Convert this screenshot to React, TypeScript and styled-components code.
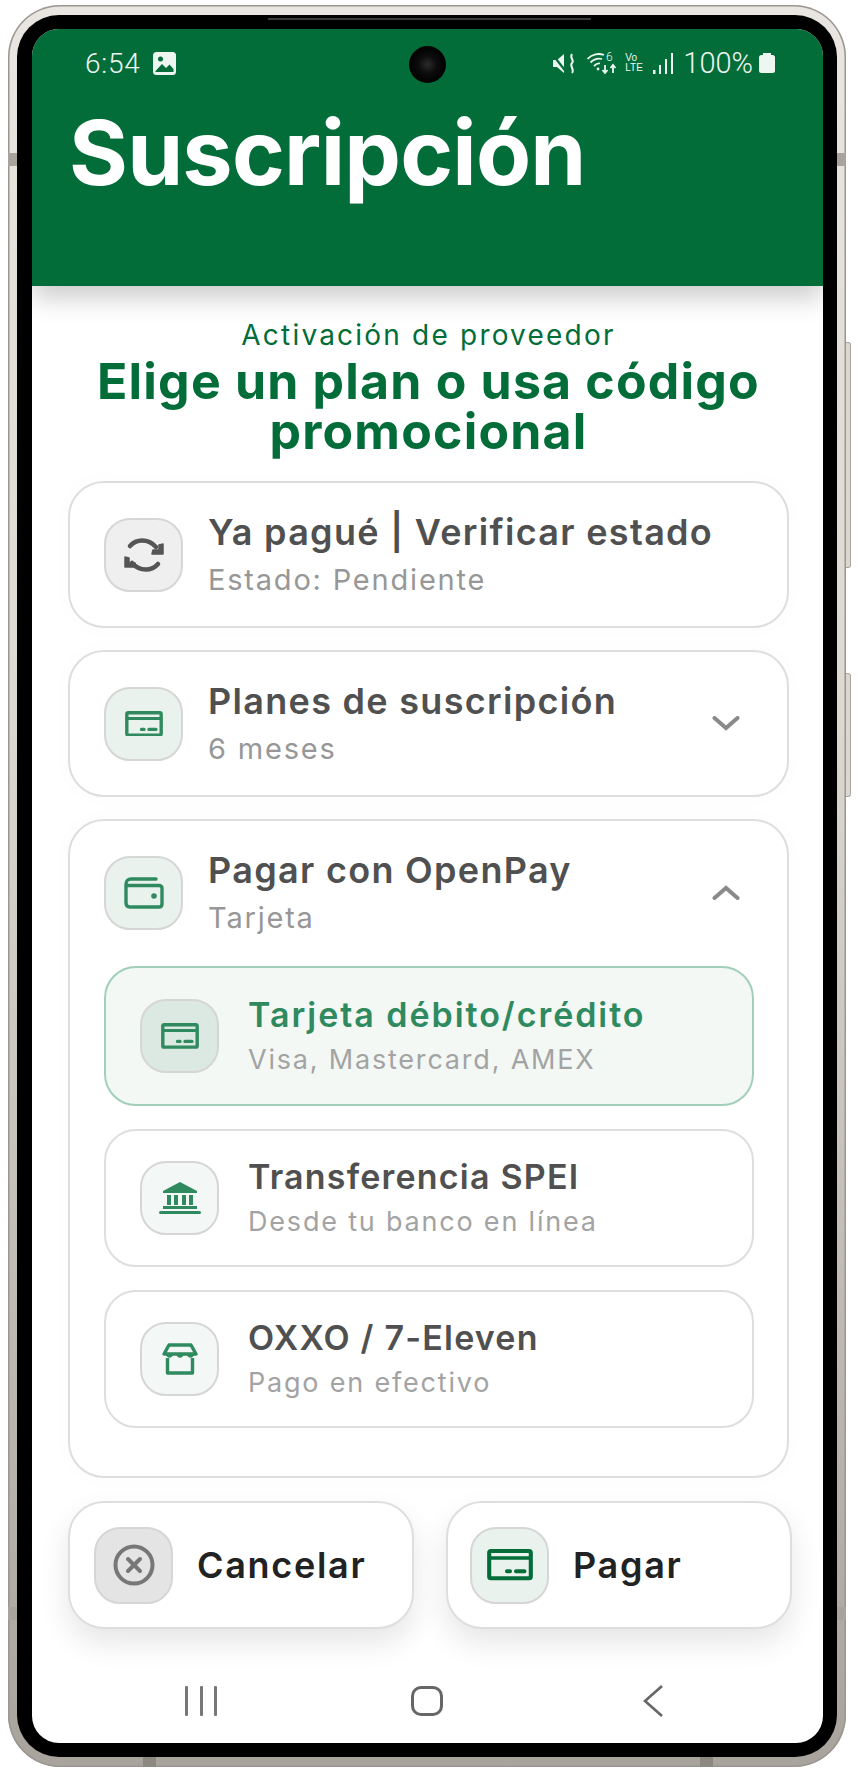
import React from "react";
import styled, { createGlobalStyle } from "styled-components";

const GlobalStyle = createGlobalStyle`
  html, body {
    margin: 0;
    padding: 0;
    background: #fff;
  }
  * {
    box-sizing: border-box;
  }
`;

const GREEN = "#026d39";
const SOFT_GREEN = "#2f8a5f";
const STATUS = "#eef6f1";

const SyncIcon = () => (
  <svg width="40" height="36" viewBox="0 0 40 36" fill="none">
    <path d="M6 9C12 2 24 1 32 10" stroke="#555" strokeWidth="4.500" strokeLinecap="round" />
    <path d="M39 7V17H28L29 13L35 13L35 8Z" fill="#555" stroke="#555" strokeWidth="1.500" strokeLinejoin="round" />
    <path d="M34 27C28 34 16 35 8 26" stroke="#555" strokeWidth="4.500" strokeLinecap="round" />
    <path d="M1 20V30H12L11 26L5 26L5 21Z" fill="#555" stroke="#555" strokeWidth="1.500" strokeLinejoin="round" />
  </svg>
);

const CardIcon = ({ size = 38, color = SOFT_GREEN }: { size?: number; color?: string }) => (
  <svg width={size} height={size * 0.68} viewBox="0 0 38 26" fill="none">
    <rect x="1.700" y="1.700" width="34.600" height="22.600" rx="1.500" stroke={color} strokeWidth="3.400" />
    <path d="M2 7.500H36" stroke={color} strokeWidth="3" />
    <path d="M16.500 18.500H19M24 18.500H31" stroke={color} strokeWidth="3.400" strokeLinecap="round" />
  </svg>
);

const WalletIcon = () => (
  <svg width="40" height="32" viewBox="0 0 40 32" fill="none" stroke={SOFT_GREEN} strokeWidth="3.400">
    <path d="M32 2H7C4 2 2 4 2 7V26C2 28.500 3.500 30 6 30H35C37 30 38 29 38 27V11C38 9.500 37 8.500 35 8.500H3" strokeLinecap="round" />
    <circle cx="30" cy="19" r="2.800" fill={SOFT_GREEN} stroke="none" />
  </svg>
);

const BankIcon = () => (
  <svg width="42" height="32" viewBox="0 0 42 32" fill={SOFT_GREEN}>
    <path d="M21 0L38 9V11H4V9Z" />
    <rect x="8" y="13" width="4" height="10" />
    <rect x="15" y="13" width="4" height="10" />
    <rect x="23" y="13" width="4" height="10" />
    <rect x="30" y="13" width="4" height="10" />
    <rect x="4" y="24" width="34" height="3" />
    <rect x="0" y="29" width="42" height="3" rx="1.500" />
  </svg>
);

const StoreIcon = () => (
  <svg width="36" height="32" viewBox="0 0 36 32" fill="none">
    <path d="M7 2H29L34 11H2Z" stroke={SOFT_GREEN} strokeWidth="3.400" strokeLinejoin="round" />
    <path d="M4 11H11C11 16 4 16 4 11ZM14.500 11H21.500C21.500 16 14.500 16 14.500 11ZM25 11H32C32 16 25 16 25 11Z" fill={SOFT_GREEN} />
    <path d="M5.500 15V30H30.500V15" stroke={SOFT_GREEN} strokeWidth="3.400" strokeLinejoin="round" />
  </svg>
);

const CancelIcon = () => (
  <svg width="42" height="42" viewBox="0 0 42 42" fill="none" stroke="#777" strokeWidth="4" strokeLinecap="round">
    <circle cx="21" cy="21" r="18.500" />
    <path d="M15 15L27 27M27 15L15 27" />
  </svg>
);

const Chevron = ({ up }: { up?: boolean }) => (
  <svg width="28" height="15" viewBox="0 0 28 15" fill="none" stroke="#8a8a8a" strokeWidth="4" strokeLinecap="round" strokeLinejoin="miter">
    <path d={up ? "M2.500 13L14 3L25.500 13" : "M2.500 2L14 12L25.500 2"} />
  </svg>
);

const GalleryIcon = () => (
  <svg width="23" height="23" viewBox="0 0 23 23">
    <rect width="23" height="23" rx="3.500" fill={STATUS} />
    <circle cx="7.500" cy="7" r="2.500" fill={GREEN} />
    <path d="M2.500 19L9 12L13 16L16.500 12.500L20.500 17V20H2.500Z" fill={GREEN} />
  </svg>
);

const MuteIcon = () => (
  <svg width="22" height="21" viewBox="0 0 22 21" fill="none">
    <path d="M0 7H4L11 1V20L4 14H0Z" fill={STATUS} />
    <path d="M0 2L14 20" stroke={GREEN} strokeWidth="2.200" />
    <path d="M19 1C16 5 22 7 19 10C16 13 22 16 19 20" stroke={STATUS} strokeWidth="2" />
  </svg>
);

const WifiIcon = () => (
  <svg width="32" height="22" viewBox="0 0 32 22" fill="none" stroke={STATUS} strokeWidth="1.800">
    <path d="M0.500 7C5 2 12 1 17 3" />
    <path d="M3.500 10.500C7 7 11 6 15 7" />
    <path d="M7 14C9 12 11 11 13 11.500" />
    <circle cx="11" cy="17" r="1.400" fill={STATUS} stroke="none" />
    <text x="19" y="9" fill={STATUS} stroke="none" fontSize="12" fontFamily="Roboto, sans-serif">6</text>
    <path d="M18 13V20M15.500 18L18 21L20.500 18" />
    <path d="M26 21V13M23.500 16L26 13L28.500 16" />
  </svg>
);

const SignalIcon = () => (
  <svg width="20" height="21" viewBox="0 0 20 21" fill={STATUS}>
    <rect x="0" y="17" width="2.500" height="4" />
    <rect x="6" y="12" width="2" height="9" />
    <rect x="12" y="6" width="2" height="15" />
    <rect x="18" y="0" width="2" height="21" />
  </svg>
);

const Page = styled.div`
  padding: 5px 16px 13px 8px;
  width: 862px;
  height: 1780px;
`;

const Device = styled.div`
  position: relative;
  height: 1762px;
  padding: 10px 9px;
  border-radius: 52px;
  background: linear-gradient(180deg, #e9e6e1 0%, #dcd8d2 40%, #a8a39d 100%);
  box-shadow: inset 0 0 0 1.5px #9b968f;
`;

const SideButton = styled.span<{ $top: number; $height: number }>`
  position: absolute;
  right: -5px;
  top: ${(p) => p.$top}px;
  height: ${(p) => p.$height}px;
  width: 5px;
  border-radius: 0 3px 3px 0;
  background: #dbd7d1;
  border: 1px solid #a9a49e;
  border-left: none;
`;

const AntennaBand = styled.span<{ $side: "left" | "right"; $top: number }>`
  position: absolute;
  ${(p) => p.$side}: 0;
  top: ${(p) => p.$top}px;
  width: 9px;
  height: 13px;
  background: #a8a39d;
`;

const BottomBand = styled.span<{ $left: number }>`
  position: absolute;
  bottom: 0;
  left: ${(p) => p.$left}px;
  width: 13px;
  height: 10px;
  background: #8d8882;
`;

const Bezel = styled.div`
  height: 100%;
  padding: 14px 14px 14px 15px;
  border-radius: 42px;
  background: #000;
`;

const Speaker = styled.span`
  position: absolute;
  top: 13px;
  left: 260px;
  width: 323px;
  height: 2px;
  background: #3a3a3a;
`;

const Screen = styled.div`
  display: flex;
  flex-direction: column;
  height: 100%;
  overflow: hidden;
  border-radius: 27px;
  background: #fff;
  font-family: Inter, "Liberation Sans", sans-serif;
`;

const Header = styled.header`
  position: relative;
  z-index: 1;
  flex: none;
  height: 257px;
  padding: 21px 36px 0 37px;
  background: ${GREEN};
  box-shadow: 0 12px 24px rgba(0, 0, 0, 0.2);
`;

const StatusBar = styled.div`
  display: flex;
  align-items: center;
  justify-content: space-between;
  height: 26px;
  padding: 0 12px 0 16px;
  color: ${STATUS};
  font-family: Roboto, sans-serif;
  font-weight: 300;
  font-size: 28px;
`;

const StatusGroup = styled.div`
  display: flex;
  align-items: center;
`;

const StatusSlot = styled.span<{ $gap: number }>`
  display: flex;
  margin-left: ${(p) => p.$gap}px;
`;

const Time = styled.span`
  letter-spacing: 0.8px;
`;

const Volte = styled.span`
  display: block;
  width: 18px;
  font-family: "Liberation Sans", sans-serif;
  font-weight: 400;
  font-size: 10px;
  line-height: 10px;
`;

const Percent = styled.span`
  font-size: 29px;
`;

const Battery = styled.span`
  position: relative;
  display: block;
  width: 16px;
  height: 18px;
  margin-top: 2px;
  border-radius: 2.5px;
  background: ${STATUS};

  &::before {
    content: "";
    position: absolute;
    top: -2px;
    left: 4px;
    width: 8px;
    height: 2px;
    background: ${STATUS};
  }
`;

const Camera = styled.span`
  position: absolute;
  top: 17px;
  left: 377px;
  width: 37px;
  height: 37px;
  border-radius: 50%;
  background: radial-gradient(circle, #2b2b2b 0, #0c0c0c 35%, #000 70%);
`;

const ScreenTitle = styled.h1`
  margin: 25px 0 0;
  color: #fff;
  font-weight: 700;
  font-size: 90px;
  line-height: 104px;
  letter-spacing: -0.8px;
`;

const Body = styled.main`
  flex: 1;
  display: flex;
  flex-direction: column;
  padding: 31px 34px 0 36px;
`;

const Overline = styled.div`
  color: ${GREEN};
  text-align: center;
  font-weight: 400;
  font-size: 28px;
  line-height: 36px;
  letter-spacing: 2.2px;
`;

const Heading = styled.h2`
  margin: 3px 0 25px;
  color: ${GREEN};
  text-align: center;
  font-weight: 700;
  font-size: 50px;
  line-height: 50px;
  letter-spacing: 1.2px;
`;

const Stack = styled.div`
  display: flex;
  flex-direction: column;
  gap: 22px;
`;

const Card = styled.section<{ $open?: boolean }>`
  padding: 0 33px ${(p) => (p.$open ? 48 : 0)}px 34px;
  border: 2px solid #dedede;
  border-radius: 36px;
  background: #fff;
  box-shadow: 0 0 24px rgba(0, 0, 0, 0.02);
`;

const CardHead = styled.div`
  display: flex;
  align-items: center;
  height: 143px;
  gap: 25px;
`;

const IconBox = styled.div<{ $tone: "gray" | "green" | "mint" | "strong" | "dark" }>`
  flex: none;
  display: flex;
  align-items: center;
  justify-content: center;
  width: 79px;
  height: 74px;
  border: 2px solid #d6d6d6;
  border-radius: 26px;
  background: ${(p) =>
    ({
      gray: "#efefef",
      dark: "#e4e4e4",
      green: "#e9f2ed",
      mint: "#f3f7f5",
      strong: "#dce9e2",
    })[p.$tone]};
`;

const CardText = styled.div`
  flex: 1;
  min-width: 0;
  padding-top: 2px;
`;

const CardTitle = styled.div`
  color: #505050;
  font-weight: 600;
  font-size: 36px;
  line-height: 46px;
  letter-spacing: 1.3px;
`;

const CardSub = styled.div`
  margin-top: 2px;
  color: #979797;
  font-size: 29px;
  line-height: 46px;
  letter-spacing: 1.8px;
`;

const CardAction = styled.div`
  flex: none;
  display: flex;
  margin-right: 14px;
`;

const Options = styled.div`
  display: flex;
  flex-direction: column;
  gap: 23px;
  margin-top: 2px;
`;

const Option = styled.div<{ $active?: boolean }>`
  display: flex;
  align-items: center;
  height: ${(p) => (p.$active ? 140 : 138)}px;
  gap: 29px;
  padding: 0 34px;
  border: 2px solid ${(p) => (p.$active ? "#a2cfb9" : "#dedede")};
  border-radius: 32px;
  background: ${(p) => (p.$active ? "#f3f8f5" : "#fff")};
`;

const OptionText = styled.div`
  padding-top: 3px;
`;

const OptionTitle = styled.div<{ $active?: boolean }>`
  color: ${(p) => (p.$active ? SOFT_GREEN : "#505050")};
  font-weight: 600;
  font-size: 34px;
  line-height: 42px;
  letter-spacing: ${(p) => (p.$active ? 1.95 : 1.2)}px;
`;

const OptionSub = styled.div`
  margin-top: 3px;
  color: #a3a3a3;
  font-size: 27px;
  line-height: 42px;
  letter-spacing: 1.8px;
`;

const Actions = styled.div`
  display: grid;
  grid-template-columns: 346px 346px;
  justify-content: space-between;
  margin: 23px -3px 0 0;
`;

const ActionButton = styled.button`
  display: flex;
  align-items: center;
  gap: 24px;
  height: 128px;
  padding: 0 24px;
  border: 2px solid #dedede;
  border-radius: 36px;
  background: #fff;
  box-shadow: 0 14px 30px rgba(0, 0, 0, 0.1);
  color: #222;
  font-family: inherit;
  font-weight: 600;
  font-size: 36px;
  letter-spacing: 1.7px;

  & + & {
    padding-left: 22px;
  }
`;

const ActionIconBox = styled(IconBox)`
  height: 77px;
`;

const NavBar = styled.nav`
  display: grid;
  grid-template-columns: repeat(3, 1fr);
  align-items: center;
  justify-items: center;
  height: 30px;
  margin: 56px 0 0;
  padding: 0 23px 0 20px;
`;

const Recents = styled.span`
  display: flex;
  gap: 11.5px;
  height: 30px;

  i {
    display: block;
    width: 3px;
    border-radius: 1px;
    background: #777;
  }
`;

const HomeKey = styled.span`
  width: 32px;
  height: 30px;
  border: 3px solid #666;
  border-radius: 10px;
`;

const BackKey = () => (
  <svg width="20" height="32" viewBox="0 0 20 32" fill="none" stroke="#666" strokeWidth="2.600">
    <path d="M19 1L2 16L19 31" />
  </svg>
);

export default function App() {
  return (
    <>
      <GlobalStyle />
      <Page>
        <Device>
          <SideButton $top={337} $height={226} />
          <SideButton $top={668} $height={124} />
          <AntennaBand $side="left" $top={148} />
          <AntennaBand $side="right" $top={148} />
          <AntennaBand $side="left" $top={1602} />
          <AntennaBand $side="right" $top={1602} />
          <BottomBand $left={135} />
          <BottomBand $left={692} />
          <Speaker />
          <Bezel>
            <Screen>
              <Header>
                <StatusBar>
                  <StatusGroup>
                    <Time>6:54</Time>
                    <StatusSlot $gap={12}>
                      <GalleryIcon />
                    </StatusSlot>
                  </StatusGroup>
                  <StatusGroup>
                    <MuteIcon />
                    <StatusSlot $gap={12}>
                      <WifiIcon />
                    </StatusSlot>
                    <StatusSlot $gap={6}>
                      <Volte>
                        Vo
                        <br />
                        LTE
                      </Volte>
                    </StatusSlot>
                    <StatusSlot $gap={10}>
                      <SignalIcon />
                    </StatusSlot>
                    <StatusSlot $gap={10}>
                      <Percent>100%</Percent>
                    </StatusSlot>
                    <StatusSlot $gap={6}>
                      <Battery />
                    </StatusSlot>
                  </StatusGroup>
                </StatusBar>
                <Camera />
                <ScreenTitle>Suscripción</ScreenTitle>
              </Header>
              <Body>
                <Overline>Activación de proveedor</Overline>
                <Heading>
                  Elige un plan o usa código
                  <br />
                  promocional
                </Heading>
                <Stack>
                  <Card>
                    <CardHead>
                      <IconBox $tone="gray">
                        <SyncIcon />
                      </IconBox>
                      <CardText>
                        <CardTitle>Ya pagué | Verificar estado</CardTitle>
                        <CardSub>Estado: Pendiente</CardSub>
                      </CardText>
                    </CardHead>
                  </Card>
                  <Card>
                    <CardHead>
                      <IconBox $tone="green">
                        <CardIcon />
                      </IconBox>
                      <CardText>
                        <CardTitle>Planes de suscripción</CardTitle>
                        <CardSub>6 meses</CardSub>
                      </CardText>
                      <CardAction>
                        <Chevron />
                      </CardAction>
                    </CardHead>
                  </Card>
                  <Card $open>
                    <CardHead>
                      <IconBox $tone="green">
                        <WalletIcon />
                      </IconBox>
                      <CardText>
                        <CardTitle>Pagar con OpenPay</CardTitle>
                        <CardSub>Tarjeta</CardSub>
                      </CardText>
                      <CardAction>
                        <Chevron up />
                      </CardAction>
                    </CardHead>
                    <Options>
                      <Option $active>
                        <IconBox $tone="strong">
                          <CardIcon />
                        </IconBox>
                        <OptionText>
                          <OptionTitle $active>Tarjeta débito/crédito</OptionTitle>
                          <OptionSub>Visa, Mastercard, AMEX</OptionSub>
                        </OptionText>
                      </Option>
                      <Option>
                        <IconBox $tone="mint">
                          <BankIcon />
                        </IconBox>
                        <OptionText>
                          <OptionTitle>Transferencia SPEI</OptionTitle>
                          <OptionSub>Desde tu banco en línea</OptionSub>
                        </OptionText>
                      </Option>
                      <Option>
                        <IconBox $tone="mint">
                          <StoreIcon />
                        </IconBox>
                        <OptionText>
                          <OptionTitle>OXXO / 7-Eleven</OptionTitle>
                          <OptionSub>Pago en efectivo</OptionSub>
                        </OptionText>
                      </Option>
                    </Options>
                  </Card>
                </Stack>
                <Actions>
                  <ActionButton>
                    <ActionIconBox $tone="dark">
                      <CancelIcon />
                    </ActionIconBox>
                    Cancelar
                  </ActionButton>
                  <ActionButton>
                    <ActionIconBox $tone="green">
                      <CardIcon size={46} color={GREEN} />
                    </ActionIconBox>
                    Pagar
                  </ActionButton>
                </Actions>
                <NavBar>
                  <Recents>
                    <i />
                    <i />
                    <i />
                  </Recents>
                  <HomeKey />
                  <BackKey />
                </NavBar>
              </Body>
            </Screen>
          </Bezel>
        </Device>
      </Page>
    </>
  );
}
